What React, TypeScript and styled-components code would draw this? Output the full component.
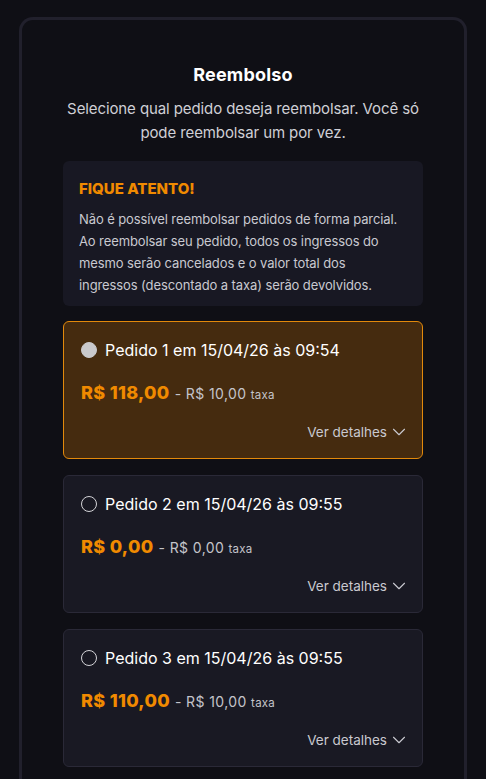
import { ChevronDown } from "lucide-react";
import { useState } from "react";
import styled, { createGlobalStyle } from "styled-components";

const GlobalStyle = createGlobalStyle`
  html, body {
    margin: 0;
    padding: 0;
    background: #0f0f15;
  }
  body {
    font-family: Inter, "Noto Sans", sans-serif;
    color: #fff;
  }
`;

const orders = [
  { id: 1, date: "15/04/26", time: "09:54", total: "118,00", fee: "10,00" },
  { id: 2, date: "15/04/26", time: "09:55", total: "0,00", fee: "0,00" },
  { id: 3, date: "15/04/26", time: "09:55", total: "110,00", fee: "10,00" },
];

export default function App() {
  const [selected, setSelected] = useState(1);

  return (
    <>
      <GlobalStyle />
      <Page>
        <Panel>
          <Title>Reembolso</Title>
          <Subtitle>
            Selecione qual pedido deseja reembolsar. Você só pode reembolsar um por vez.
          </Subtitle>

          <Notice>
            <NoticeTitle>FIQUE ATENTO!</NoticeTitle>
            <NoticeText>
              Não é possível reembolsar pedidos de forma parcial. Ao reembolsar seu pedido, todos os
              ingressos do mesmo serão cancelados e o valor total dos ingressos (descontado a taxa)
              serão devolvidos.
            </NoticeText>
          </Notice>

          <OrderList>
            {orders.map((o) => (
              <OrderCard key={o.id} $active={selected === o.id} onClick={() => setSelected(o.id)}>
                <OrderHead>
                  <Radio $checked={selected === o.id} />
                  <OrderName>
                    Pedido {o.id} em {o.date} às {o.time}
                  </OrderName>
                </OrderHead>
                <PriceRow>
                  <Price>R$ {o.total}</Price>
                  <Fee>
                    - R$ {o.fee} <small>taxa</small>
                  </Fee>
                </PriceRow>
                <DetailsRow>
                  <DetailsButton type="button">
                    Ver detalhes
                    <ChevronDown size={22} strokeWidth={1.2} />
                  </DetailsButton>
                </DetailsRow>
              </OrderCard>
            ))}
          </OrderList>
        </Panel>
      </Page>
    </>
  );
}

const Page = styled.div`
  padding: 17px 19px 0;
  min-height: 779px;
  box-sizing: border-box;
`;

const Panel = styled.section`
  border: 3px solid #21202c;
  border-bottom: none;
  border-radius: 14px 14px 0 0;
  background: #0f0f15;
  padding: 43px 41px 24px;
  display: flex;
  flex-direction: column;
`;

const Title = styled.h1`
  margin: 0;
  text-align: center;
  font-size: 18px;
  font-weight: 700;
  letter-spacing: 0.2px;
  line-height: 24px;
  color: #fff;
`;

const Subtitle = styled.p`
  margin: 10px 0 0;
  text-align: center;
  font-size: 15px;
  letter-spacing: -0.1px;
  line-height: 24px;
  color: #cfcfd6;
`;

const Notice = styled.div`
  margin-top: 16px;
  background: #181823;
  border-radius: 6px;
  padding: 17px 16px 10px;
`;

const NoticeTitle = styled.h2`
  margin: 0;
  font-size: 15px;
  font-weight: 800;
  line-height: 22px;
  color: #f08a00;
`;

const NoticeText = styled.p`
  margin: 8px 0 0;
  font-size: 13px;
  letter-spacing: -0.1px;
  line-height: 22px;
  color: #c9c9d0;
`;

const OrderList = styled.div`
  margin-top: 15px;
  display: flex;
  flex-direction: column;
  gap: 16px;
`;

const OrderCard = styled.div<{ $active: boolean }>`
  display: flex;
  flex-direction: column;
  gap: 20px;
  padding: 16px 17px 16px;
  border-radius: 6px;
  border: 1px solid ${(p) => (p.$active ? "#e2890b" : "#2a2937")};
  background: ${(p) => (p.$active ? "#452b0f" : "#191923")};
  cursor: pointer;
`;

const OrderHead = styled.div`
  display: flex;
  align-items: center;
  gap: 8px;
  height: 24px;
`;

const Radio = styled.span<{ $checked: boolean }>`
  width: 16px;
  height: 16px;
  box-sizing: border-box;
  border-radius: 50%;
  border: 1.5px solid ${(p) => (p.$checked ? "#c9c9cc" : "#d4d4d8")};
  background: ${(p) => (p.$checked ? "#c9c9cc" : "transparent")};
  flex-shrink: 0;
`;

const OrderName = styled.span`
  font-size: 16px;
  line-height: 24px;
  color: #fff;
`;

const PriceRow = styled.div`
  display: flex;
  align-items: baseline;
  gap: 5px;
  height: 20px;
`;

const Price = styled.span`
  font-size: 18px;
  font-weight: 800;
  letter-spacing: 0.3px;
  color: #f08a00;
`;

const Fee = styled.span`
  font-size: 14px;
  letter-spacing: 0.4px;
  color: #c4c4ca;

  small {
    font-size: 11.5px;
    letter-spacing: 0.2px;
  }
`;

const DetailsRow = styled.div`
  display: flex;
  justify-content: flex-end;
  height: 20px;
`;

const DetailsButton = styled.button`
  display: flex;
  align-items: center;
  gap: 1px;
  padding: 0;
  margin-right: -5px;
  border: none;
  background: none;
  font-family: inherit;
  font-size: 13.5px;
  color: #c9c9d0;
  cursor: pointer;
`;
